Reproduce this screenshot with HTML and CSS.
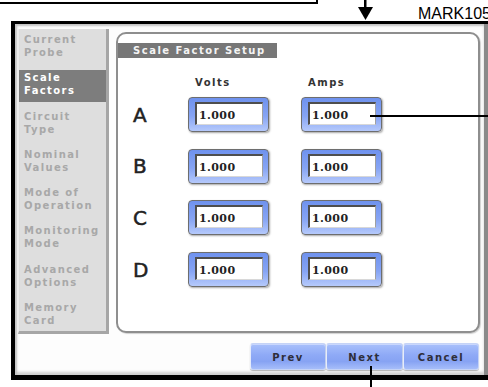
FILE: index.html
```
<!DOCTYPE html>
<html>
<head>
<meta charset="utf-8">
<link rel="stylesheet" href="styles.css">
</head>
<body>
<div class="page">
  <div class="callout"></div>
  <svg class="arrow" width="16" height="21" viewBox="0 0 16 21"><rect x="6" y="0" width="2.5" height="8" fill="#000"/><polygon points="0,7 15,7 7.5,20" fill="#000"/></svg>
  <div class="mark">MARK105</div>

  <div class="device">
    <div class="screen">
      <div class="main">
        <ul class="menu">
          <li>Current<br>Probe</li>
          <li class="sel">Scale<br>Factors</li>
          <li>Circuit<br>Type</li>
          <li>Nominal<br>Values</li>
          <li>Mode of<br>Operation</li>
          <li>Monitoring<br>Mode</li>
          <li>Advanced<br>Options</li>
          <li>Memory<br>Card</li>
        </ul>
        <section class="panel">
          <div class="panel-title">Scale Factor Setup</div>
          <div class="heads">
            <span></span><span class="col">Volts</span><span class="col">Amps</span>
          </div>
          <div class="rows">
            <span class="ch">A</span><div class="field"><div class="val">1.000</div></div><div class="field"><div class="val">1.000</div></div>
            <span class="ch">B</span><div class="field"><div class="val">1.000</div></div><div class="field"><div class="val">1.000</div></div>
            <span class="ch">C</span><div class="field"><div class="val">1.000</div></div><div class="field"><div class="val">1.000</div></div>
            <span class="ch">D</span><div class="field"><div class="val">1.000</div></div><div class="field"><div class="val">1.000</div></div>
          </div>
        </section>
      </div>
      <div class="buttons">
        <div class="btn w76">Prev</div>
        <div class="btn w77">Next</div>
        <div class="btn w76">Cancel</div>
      </div>
    </div>
  </div>

  <div class="leader-h"></div>
  <div class="leader-v"></div>
</div>
</body>
</html>
```
FILE: styles.css
```
* { box-sizing: border-box; }
html, body { margin: 0; padding: 0; background: #fff; }
.page {
  position: relative;
  width: 488px;
  height: 387px;
  overflow: hidden;
  background: #fff;
  padding-top: 21px;
  padding-left: 11px;
}
.callout {
  position: absolute;
  left: 0; top: 0;
  width: 318px; height: 4px;
  border-right: 2px solid #000;
  border-bottom: 2px solid #000;
}
.arrow { position: absolute; left: 358px; top: 0; }
.mark {
  position: absolute;
  left: 418px; top: 6px;
  font-family: "Liberation Sans", Arial, sans-serif;
  font-size: 16px;
  line-height: 16px;
  color: #000;
  white-space: nowrap;
}
.leader-h { position: absolute; left: 370px; top: 115px; width: 118px; height: 2px; background: #000; }
.leader-v { position: absolute; left: 370px; top: 366px; width: 2px; height: 21px; background: #000; }

.device {
  width: 477px;
  border-top: 3px solid #000;
  border-left: 4px solid #000;
  border-bottom: 5px solid #000;
}
.screen {
  height: 351px;
  background: #fdfdfd;
  border-right: 4px solid #8a8a8a;
  padding: 5px 0 0 3px;
  box-shadow: inset 2px 2px 2px #c4c4c4, inset 0 -3px 3px #cfcfcf;
  font-family: "DejaVu Sans", Verdana, sans-serif;
}
.main { display: flex; align-items: flex-start; }
.menu {
  list-style: none;
  margin: 0;
  padding: 3px 0 0 0;
  width: 91px;
  height: 305px;
  background: #dedede;
  border-left: 1px solid #ececec;
  border-right: 3px solid #a6a6a6;
  border-bottom: 3px solid #a6a6a6;
}
.menu li {
  height: 32px;
  margin-bottom: 6.3px;
  padding: 1px 0 0 5px;
  font-size: 10px;
  line-height: 13px;
  font-weight: bold;
  letter-spacing: 1.4px;
  color: #a8a8a8;
  white-space: nowrap;
}
.menu li.sel { background: #7d7d7d; color: #fff; }

.panel {
  margin: 3px 0 0 7px;
  width: 364px;
  height: 301px;
  border: 2px solid #8e8e8e;
  border-radius: 10px;
  background: #fff;
  box-shadow: 1px 1px 1px #d0d0d0;
}
.panel-title {
  margin-top: 9px;
  width: 159px;
  height: 15px;
  background: #777;
  color: #f4f4f4;
  font-size: 10px;
  line-height: 15px;
  font-weight: bold;
  letter-spacing: 1.5px;
  padding-left: 15px;
  white-space: nowrap;
}
.heads, .rows {
  display: grid;
  grid-template-columns: 23px 81px 81px;
  column-gap: 32px;
  padding-left: 15px;
}
.heads { margin-top: 19px; height: 12px; margin-bottom: 8px; }
.col {
  padding-left: 7px;
  font-size: 10px;
  line-height: 12px;
  font-weight: bold;
  letter-spacing: 1.5px;
  color: #333;
}
.rows { row-gap: 16.7px; align-items: center; }
.ch {
  font-size: 20px;
  line-height: 20px;
  color: #222;
  -webkit-text-stroke: 0.5px #222;
}
.field {
  width: 81px;
  height: 35px;
  border: 1px solid #6e6e6e;
  border-radius: 4px;
  padding: 4px 5px 6px 6px;
  background: linear-gradient(to bottom, #6f92ee 0%, #86a4f4 55%, #b5c9fb 100%);
  box-shadow: 1px 1px 2px rgba(0,0,0,0.35);
}
.val {
  height: 100%;
  background: #fff;
  border-top: 2px solid #4e4e4e;
  border-left: 2px solid #4e4e4e;
  border-right: 1px solid #a0a0a0;
  border-bottom: 1px solid #d8d8d8;
  padding: 5px 0 0 2px;
  font-family: "DejaVu Serif", "Liberation Serif", serif;
  font-size: 11px;
  line-height: 13px;
  font-weight: bold;
  letter-spacing: 0.4px;
  color: #222;
}
.buttons {
  display: flex;
  justify-content: flex-end;
  margin-top: 9px;
  padding-right: 5px;
}
.btn {
  height: 27px;
  border-radius: 3px;
  border: 1px solid #c5d3f6;
  border-left-color: #e6ecfb;
  background: linear-gradient(to bottom, #a8c0fb 0%, #8ea9f6 45%, #87a3f3 70%, #a6bdfa 100%);
  box-shadow: inset 0 1px 0 #c9d7fd, 0 1px 1px #b0b0b0;
  color: #2e2e3a;
  font-size: 10px;
  font-weight: bold;
  letter-spacing: 1.5px;
  line-height: 25px;
  text-align: center;
  padding-top: 1px;
}
.w76 { width: 76px; }
.w77 { width: 77px; }
```
